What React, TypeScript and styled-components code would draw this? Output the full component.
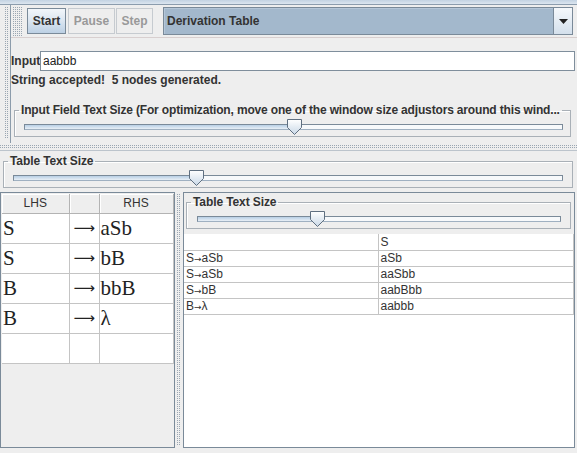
import React from 'react';
import styled, { createGlobalStyle } from 'styled-components';

const Global = createGlobalStyle`
  html, body { margin: 0; padding: 0; background: #eeeeee; }
  body { font-family: "Liberation Sans", Arial, sans-serif; font-size: 12px; color: #333333; }
  * { box-sizing: border-box; }
`;

const dots = `
  background-color: #eeeeee;
  background-image: conic-gradient(from 270deg at 1px 1px, #9aa6b2 0 25%, transparent 0);
  background-size: 2px 2px;
`;

const Window = styled.div`
  width: 577px;
  height: 453px;
  display: flex;
  flex-direction: column;
  overflow: hidden;
  background: #eeeeee;
`;

const TabEdge = styled.div`
  flex: none;
  height: 5px;
  background: linear-gradient(#c2d2e2, #dce6f0);
  border-bottom: 1px solid #8b9cad;
`;

const TopPane = styled.div`
  flex: none;
  height: 138px;
  display: flex;
`;

const LeftStub = styled.div`
  width: 3px;
`;

const VGrip = styled.div`
  width: 7px;
  padding: 2px 1px 4px 1px;
  ${dots}
  background-clip: content-box;
`;

const TopContent = styled.div`
  flex: 1;
  min-width: 0;
  border-left: 1px solid #8c9cab;
  display: flex;
  flex-direction: column;
`;

const Toolbar = styled.div`
  height: 33px;
  display: flex;
  align-items: center;
  padding-left: 2px;
  border-bottom: 1px solid #d8cfcf;
`;

const ToolGrip = styled.div`
  width: 10px;
  height: 29px;
  ${dots}
`;

const ToolButton = styled.button<{ $w: number; $ml: number; $disabled?: boolean }>`
  width: ${p => p.$w}px;
  height: 26px;
  margin-left: ${p => p.$ml}px;
  padding: 0;
  font-family: "Liberation Sans", Arial, sans-serif;
  font-size: 12px;
  font-weight: bold;
  color: ${p => (p.$disabled ? '#999999' : '#333333')};
  border: 1px solid ${p => (p.$disabled ? '#c6cbd0' : '#7a8a99')};
  background: ${p =>
    p.$disabled
      ? '#eeeeee'
      : 'linear-gradient(#f2f6fa 0%, #dde7f1 45%, #bcd0e4 100%)'};
  cursor: default;
`;

const Combo = styled.div`
  width: 410px;
  height: 28px;
  margin-left: 10px;
  display: flex;
  border: 1px solid #7a8a99;
  background: #a3b8cc;
  box-shadow: inset 1px 1px 0 #b4c6d8;
`;

const ComboText = styled.div`
  flex: 1;
  display: flex;
  align-items: center;
  padding-left: 3px;
  font-weight: bold;
  color: #333333;
`;

const ComboArrow = styled.div`
  width: 19px;
  display: flex;
  align-items: center;
  justify-content: center;
  border-left: 1px solid #7a8a99;
  background: linear-gradient(#f5f8fb, #d4e0ec);
`;

const InputRow = styled.div`
  margin-top: 13px;
  height: 20px;
  display: flex;
  align-items: center;
`;

const Label = styled.span`
  width: 29px;
  font-weight: bold;
  color: #333333;
`;

const Field = styled.div`
  flex: 1;
  height: 20px;
  margin-right: 2px;
  border: 1px solid #7f8e9c;
  background: #ffffff;
  padding-left: 2px;
  display: flex;
  align-items: center;
  color: #222222;
`;

const Status = styled.div`
  margin-top: 2px;
  line-height: 15px;
  font-weight: bold;
  white-space: pre;
  color: #333333;
`;

const TitledBox = styled.fieldset<{ $mt: number; $ml: number; $mr: number }>`
  margin: ${p => p.$mt}px ${p => p.$mr}px 0 ${p => p.$ml}px;
  padding: 1px 0 1px 0;
  min-inline-size: 0;
  border: 1px solid #a9b0b7;
  box-shadow: inset 1px 1px 0 #ffffff;
`;

const Legend = styled.legend<{ $ls?: number }>`
  margin-left: 4px;
  padding: 0 2px;
  font-weight: bold;
  line-height: 15px;
  white-space: nowrap;
  letter-spacing: ${p => p.$ls ?? -0.1}px;
  color: #333333;
`;

const SliderRow = styled.div<{ $ml: number; $mr: number }>`
  position: relative;
  height: 16px;
  margin: 0 ${p => p.$mr}px 0 ${p => p.$ml}px;
  display: flex;
  align-items: center;
`;

const Track = styled.div`
  flex: 1;
  height: 6px;
  border: 1px solid #7a8a99;
  border-bottom-color: #9fb0c1;
  background: #f7f9fb;
  display: flex;
`;

const TrackFill = styled.div`
  height: 100%;
  background: linear-gradient(#b8cfe5, #e8eff6);
`;

const ThumbSvg = styled.svg`
  position: absolute;
  top: 0;
`;

const HDivider = styled.div`
  flex: none;
  height: 8px;
  padding: 1px 0 2px 0;
  ${dots}
  background-clip: content-box;
  border-bottom: 1px solid #bcc4cc;
`;

const Bottom = styled.div`
  flex: 1;
  display: flex;
  flex-direction: column;
  min-height: 0;
`;

const SplitRow = styled.div`
  margin-top: 4px;
  height: 256px;
  display: flex;
`;

const LeftPane = styled.div`
  width: 175px;
  border: 1px solid #7a8a99;
  padding: 1px;
  background: #eeeeee;
`;

const SplitGrip = styled.div`
  width: 8px;
  padding: 2px 2px;
  ${dots}
  background-clip: content-box;
`;

const RightPane = styled.div`
  flex: 1;
  margin-right: 2px;
  border: 1px solid #7a8a99;
  display: flex;
  flex-direction: column;
  background: #eeeeee;
`;

const GrammarTable = styled.table`
  border-collapse: collapse;
  table-layout: fixed;
  width: 171px;
  background: #eeeeee;
`;

const HeadCell = styled.th<{ $w: number }>`
  width: ${p => p.$w}px;
  height: 19px;
  padding: 0;
  font-weight: normal;
  font-size: 12px;
  color: #333333;
  background: #eeeeee;
  border-right: 1px solid #b3b3b3;
  border-bottom: 1px solid #b3b3b3;
  box-shadow: inset 1px 1px 0 #ffffff;
`;

const GCell = styled.td<{ $pl: number }>`
  height: 30px;
  padding: 0 0 0 ${p => p.$pl}px;
  background: #ffffff;
  border-right: 1px solid #c4c4c4;
  border-bottom: 1px solid #c4c4c4;
  font-family: "Liberation Serif", "DejaVu Serif", serif;
  font-size: 21px;
  color: #222222;
  white-space: nowrap;
  overflow: hidden;
  vertical-align: middle;
`;

const LongArrow = styled.span`
  font-family: "DejaVu Sans", sans-serif;
  font-size: 15px;
  position: relative;
  top: -2px;
`;

const TableArea = styled.div`
  flex: 1;
  margin-top: 5px;
  background: #ffffff;
`;

const DerivTable = styled.table`
  border-collapse: collapse;
  table-layout: fixed;
  width: 389px;
`;

const DCell = styled.td<{ $w: number }>`
  width: ${p => p.$w}px;
  height: 16px;
  padding: 0 0 0 2px;
  border-right: 1px solid #c4c4c4;
  border-bottom: 1px solid #c4c4c4;
  font-size: 12px;
  line-height: 14px;
  color: #333333;
  white-space: nowrap;
`;

const DRow = styled.tr`
  height: 16px;
`;

const SmallArrow = styled.span`
  font-family: "DejaVu Sans", sans-serif;
  font-size: 9px;
`;

const BottomStrip = styled.div`
  flex: 1;
`;

function Slider({ f, ml, mr }: { f: number; ml: number; mr: number }) {
  return (
    <SliderRow $ml={ml} $mr={mr}>
      <Track>
        <TrackFill style={{ width: `${f * 100}%` }} />
      </Track>
      <ThumbSvg
        width="16"
        height="16"
        viewBox="0 0 16 16"
        style={{ left: `calc((100% - 15px) * ${f})` }}
      >
        <defs>
          <linearGradient id="thg" x1="0" y1="0" x2="0" y2="1">
            <stop offset="0" stopColor="#ffffff" />
            <stop offset="1" stopColor="#c9d8e7" />
          </linearGradient>
        </defs>
        <path d="M0.5 0.5 H14.5 V8.5 L7.5 15.5 L0.5 8.5 Z" fill="url(#thg)" stroke="#5f6f80" />
      </ThumbSvg>
    </SliderRow>
  );
}

const productions: [string, string][] = [
  ['S', 'aSb'],
  ['S', 'bB'],
  ['B', 'bbB'],
  ['B', 'λ'],
  ['', ''],
];

const derivation: [string, string, string][] = [
  ['', '', 'S'],
  ['S', 'aSb', 'aSb'],
  ['S', 'aSb', 'aaSbb'],
  ['S', 'bB', 'aabBbb'],
  ['B', 'λ', 'aabbb'],
];

export default function App() {
  return (
    <>
      <Global />
      <Window>
        <TabEdge />
        <TopPane>
          <LeftStub />
          <VGrip />
          <TopContent>
            <Toolbar>
              <ToolGrip />
              <ToolButton $w={39} $ml={4}>Start</ToolButton>
              <ToolButton $w={47} $ml={2} $disabled>Pause</ToolButton>
              <ToolButton $w={37} $ml={1} $disabled>Step</ToolButton>
              <Combo>
                <ComboText>Derivation Table</ComboText>
                <ComboArrow>
                  <svg width="9" height="5" viewBox="0 0 9 5">
                    <path d="M0 0 H9 L4.5 5 Z" fill="#222222" />
                  </svg>
                </ComboArrow>
              </Combo>
            </Toolbar>
            <InputRow>
              <Label>Input</Label>
              <Field>aabbb</Field>
            </InputRow>
            <Status>String accepted!  5 nodes generated.</Status>
            <TitledBox $mt={15} $ml={3} $mr={6}>
              <Legend $ls={-0.16}>
                Input Field Text Size (For optimization, move one of the window size adjustors around this wind...
              </Legend>
              <Slider f={0.501} ml={9} mr={7} />
            </TitledBox>
          </TopContent>
        </TopPane>
        <HDivider />
        <Bottom>
          <TitledBox $mt={3} $ml={3} $mr={4}>
            <Legend>Table Text Size</Legend>
            <Slider f={0.329} ml={9} mr={9} />
          </TitledBox>
          <SplitRow>
            <LeftPane>
              <GrammarTable>
                <thead>
                  <tr>
                    <HeadCell $w={67}>LHS</HeadCell>
                    <HeadCell $w={30}></HeadCell>
                    <HeadCell $w={74}>RHS</HeadCell>
                  </tr>
                </thead>
                <tbody>
                  {productions.map(([l, r], i) => (
                    <tr key={i}>
                      <GCell $pl={1}>{l}</GCell>
                      <GCell $pl={4}>{l ? <LongArrow>⟶</LongArrow> : ''}</GCell>
                      <GCell $pl={1}>{r}</GCell>
                    </tr>
                  ))}
                </tbody>
              </GrammarTable>
            </LeftPane>
            <SplitGrip />
            <RightPane>
              <TitledBox $mt={2} $ml={2} $mr={3}>
                <Legend>Table Text Size</Legend>
                <Slider f={0.325} ml={10} mr={9} />
              </TitledBox>
              <TableArea>
                <DerivTable>
                  <tbody>
                    {derivation.map(([l, r, s], i) => (
                      <DRow key={i}>
                        <DCell $w={194}>
                          {l}
                          {l ? <SmallArrow>→</SmallArrow> : null}
                          {r}
                        </DCell>
                        <DCell $w={195}>{s}</DCell>
                      </DRow>
                    ))}
                  </tbody>
                </DerivTable>
              </TableArea>
            </RightPane>
          </SplitRow>
          <BottomStrip />
        </Bottom>
      </Window>
    </>
  );
}
